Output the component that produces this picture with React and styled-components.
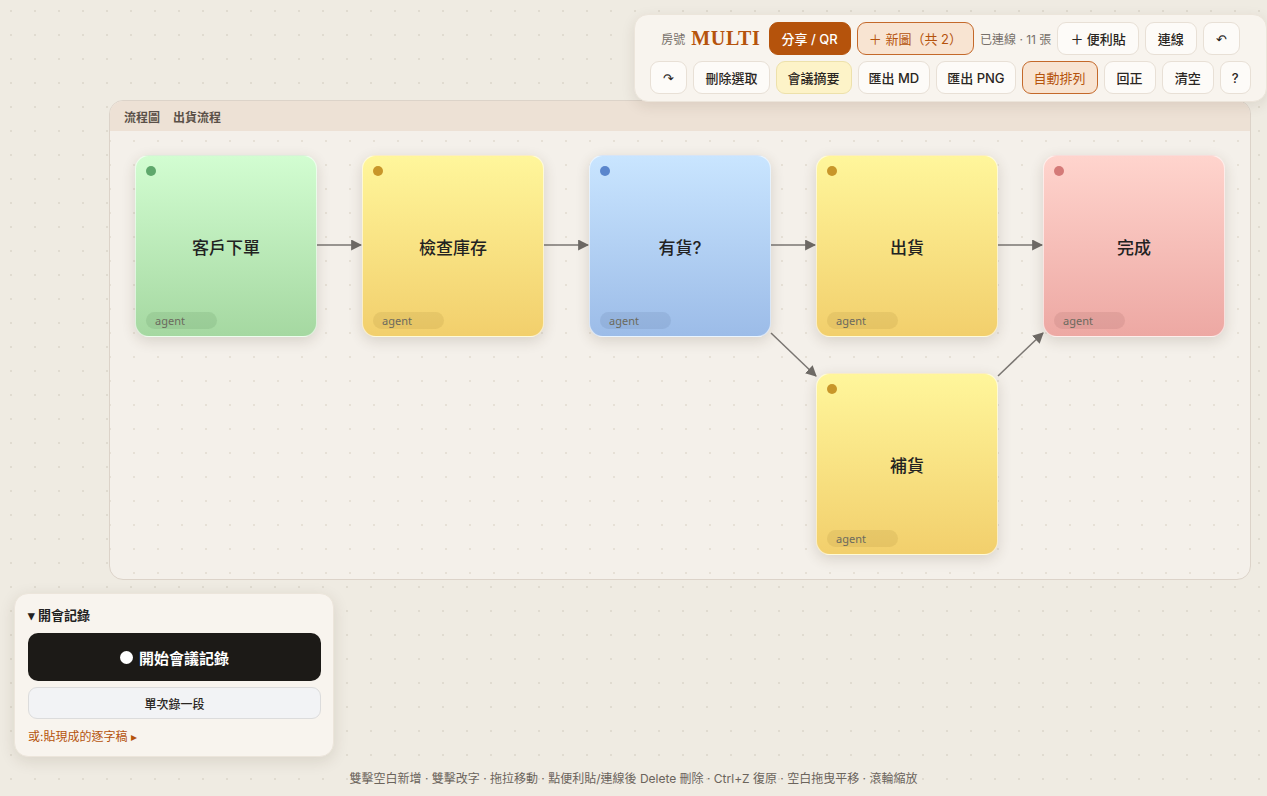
import React from 'react'
import styled, { createGlobalStyle, css } from 'styled-components'

const GlobalStyle = createGlobalStyle`
  html, body {
    margin: 0;
    height: 100%;
  }
  body {
    font-family: Inter, "Noto Sans CJK TC", sans-serif;
    color: #2a2622;
    background-color: #efebe2;
    background-image: radial-gradient(circle, #e0dbd0 1px, transparent 1.3px);
    background-size: 24px 24px;
    background-position: -1px -1px;
    overflow: hidden;
  }
`

const Page = styled.div`
  position: relative;
  width: 1267px;
  height: 796px;
`

/* ---------- toolbar ---------- */

const Toolbar = styled.div`
  position: absolute;
  top: 14px;
  left: 634px;
  width: 633px;
  box-sizing: border-box;
  padding: 7px 0;
  display: flex;
  flex-direction: column;
  align-items: center;
  gap: 6px;
  background: #f8f4ee;
  border: 1px solid #ece5db;
  border-radius: 14px;
  box-shadow: 0 4px 14px rgba(60, 40, 20, 0.1);
`

const ToolRow = styled.div`
  display: flex;
  align-items: center;
  gap: 6px;
`

const Muted = styled.span`
  font-size: 12px;
  color: #77706a;
`

const Room = styled.span`
  font-family: "Liberation Serif", serif;
  font-weight: 700;
  font-size: 20px;
  letter-spacing: 0.7px;
  color: #b5530c;
  margin-right: 2px;
`

const variants = {
  plain: css`
    background: #fdfbf8;
    border-color: #e8e0d6;
    color: #2a2622;
  `,
  primary: css`
    background: #b5530c;
    border-color: #b5530c;
    color: #fff;
  `,
  accent: css`
    background: #f8e4d2;
    border-color: #c4692a;
    color: #b5530c;
    font-weight: 400;
  `,
  soft: css`
    background: #fdf3c8;
    border-color: #ede1ab;
    color: #2a2622;
  `,
}

const Btn = styled.button`
  height: 33px;
  box-sizing: border-box;
  padding: 0 ${p => p.$pad || 11}px;
  border: 1px solid;
  border-radius: 9px;
  font-family: inherit;
  font-size: 13px;
  font-weight: 500;
  display: inline-flex;
  align-items: center;
  justify-content: center;
  gap: 4px;
  ${p => variants[p.$v || 'plain']}
`

/* ---------- frame / diagram ---------- */

const Frame = styled.section`
  position: absolute;
  left: 109px;
  top: 100px;
  width: 1142px;
  height: 480px;
  box-sizing: border-box;
  border: 1.5px solid #dcd3c9;
  border-radius: 14px;
  overflow: hidden;
  display: flex;
  flex-direction: column;
  background-color: #f4f0ea;
  background-image: radial-gradient(circle, #e6e0d6 1px, transparent 1.3px);
  background-size: 24px 24px;
  background-position: 12px 4px;
`

const FrameHead = styled.div`
  height: 30px;
  flex: none;
  display: flex;
  align-items: center;
  gap: 13px;
  padding-left: 14px;
  background: #ede1d5;
  font-size: 12px;
  font-weight: 700;
  color: #5a5048;
`

const Canvas = styled.div`
  position: relative;
  flex: 1;
`

const palettes = {
  green: { top: '#d2fdd1', bottom: '#a5d8a1', dot: '#5fa86c', pill: 'rgba(60,110,60,0.12)' },
  yellow: { top: '#fff69b', bottom: '#f2cf6c', dot: '#c8962a', pill: 'rgba(120,90,20,0.1)' },
  blue: { top: '#c9e5ff', bottom: '#9cbce8', dot: '#5b86cc', pill: 'rgba(50,70,110,0.1)' },
  pink: { top: '#ffd4cd', bottom: '#eda8a3', dot: '#d47a78', pill: 'rgba(110,50,50,0.1)' },
}

const Note = styled.div`
  position: absolute;
  width: 182px;
  height: 182px;
  box-sizing: border-box;
  border-radius: 14px;
  border: 1px solid rgba(255, 255, 255, 0.6);
  background: linear-gradient(180deg, ${p => palettes[p.$c].top}, ${p => palettes[p.$c].bottom});
  box-shadow: 0 4px 14px rgba(70, 50, 30, 0.16);
  display: flex;
  align-items: center;
  justify-content: center;
`

const Dot = styled.span`
  position: absolute;
  left: 10px;
  top: 10px;
  width: 10px;
  height: 10px;
  border-radius: 50%;
  background: ${p => palettes[p.$c].dot};
`

const NoteTitle = styled.div`
  font-size: 17px;
  font-weight: 500;
  color: #222;
  margin-top: 1px;
`

const Pill = styled.span`
  position: absolute;
  left: 10px;
  bottom: 7px;
  width: 71px;
  height: 17px;
  box-sizing: border-box;
  padding-left: 9px;
  border-radius: 9px;
  background: ${p => palettes[p.$c].pill};
  font-family: "Noto Sans", sans-serif;
  font-size: 11px;
  line-height: 17px;
  color: #6b6a5e;
`

const Wires = styled.svg`
  position: absolute;
  left: 0;
  top: 0;
  width: 100%;
  height: 100%;
  pointer-events: none;
`

/* ---------- meeting panel ---------- */

const Panel = styled.aside`
  position: absolute;
  left: 14px;
  top: 593px;
  width: 320px;
  box-sizing: border-box;
  padding: 11px 12px 12px 13px;
  background: #f8f4ee;
  border: 1px solid #ece5db;
  border-radius: 14px;
  box-shadow: 0 4px 16px rgba(60, 40, 20, 0.12);
  display: flex;
  flex-direction: column;
`

const PanelTitle = styled.div`
  font-size: 13px;
  font-weight: 700;
  color: #222;
  margin-bottom: 9px;
`

const RecordBtn = styled.button`
  height: 48px;
  border: none;
  border-radius: 10px;
  background: #1c1a17;
  color: #fff;
  font-family: inherit;
  font-size: 15px;
  font-weight: 700;
  display: flex;
  align-items: center;
  justify-content: center;
  gap: 6px;
`

const RecDot = styled.span`
  width: 13px;
  height: 13px;
  border-radius: 50%;
  background: #fff;
`

const OnceBtn = styled.button`
  margin-top: 6px;
  height: 32px;
  border: 1px solid #dcdcdc;
  border-radius: 9px;
  background: #f2f3f5;
  font-family: inherit;
  font-size: 12px;
  font-weight: 500;
  color: #2a2622;
`

const PasteLink = styled.a`
  margin-top: 8px;
  font-size: 12px;
  color: #b5530c;
`

const Hint = styled.div`
  position: absolute;
  left: 0;
  right: 0;
  top: 769px;
  text-align: center;
  font-size: 12px;
  color: #6b645c;
`

const nodes = [
  { x: 25, y: 24, c: 'green', t: '客戶下單' },
  { x: 252, y: 24, c: 'yellow', t: '檢查庫存' },
  { x: 479, y: 24, c: 'blue', t: '有貨?' },
  { x: 706, y: 24, c: 'yellow', t: '出貨' },
  { x: 933, y: 24, c: 'pink', t: '完成' },
  { x: 706, y: 242, c: 'yellow', t: '補貨' },
]

// canvas coordinates (frame left 109 + border, top 100 + head 31)
const links = [
  [207, 114, 251, 114],
  [434, 114, 478, 114],
  [661, 114, 705, 114],
  [888, 114, 932, 114],
  [661, 202, 706, 245],
  [888, 245, 933, 202],
]

export default function App() {
  return (
    <Page>
      <GlobalStyle />

      <Frame>
        <FrameHead>
          <span>流程圖</span>
          <span>出貨流程</span>
        </FrameHead>
        <Canvas>
          <Wires>
            <defs>
              <marker id="arr" viewBox="0 0 10 10" refX="9" refY="5" markerWidth="11" markerHeight="11" markerUnits="userSpaceOnUse" orient="auto">
                <path d="M0 0 L10 5 L0 10 z" fill="#6e6a66" />
              </marker>
            </defs>
            {links.map(([x1, y1, x2, y2], i) => (
              <line key={i} x1={x1} y1={y1} x2={x2} y2={y2} stroke="#7a7672" strokeWidth="1.5" markerEnd="url(#arr)" />
            ))}
          </Wires>
          {nodes.map(n => (
            <Note key={n.t} $c={n.c} style={{ left: n.x, top: n.y }}>
              <Dot $c={n.c} />
              <NoteTitle>{n.t}</NoteTitle>
              <Pill $c={n.c}>agent</Pill>
            </Note>
          ))}
        </Canvas>
      </Frame>

      <Toolbar>
        <ToolRow>
          <Muted>房號</Muted>
          <Room>MULTI</Room>
          <Btn $v="primary" $pad={12}>分享 / QR</Btn>
          <Btn $v="accent">＋ 新圖（共 2）</Btn>
          <Muted>已連線 · 11 張</Muted>
          <Btn $pad={12}>＋ 便利貼</Btn>
          <Btn $pad={12}>連線</Btn>
          <Btn $pad={12}>↶</Btn>
        </ToolRow>
        <ToolRow>
          <Btn $pad={12}>↷</Btn>
          <Btn>刪除選取</Btn>
          <Btn $v="soft">會議摘要</Btn>
          <Btn $pad={10}>匯出 MD</Btn>
          <Btn $pad={10}>匯出 PNG</Btn>
          <Btn $v="accent">自動排列</Btn>
          <Btn $pad={12}>回正</Btn>
          <Btn $pad={12}>清空</Btn>
          <Btn $pad={11}>?</Btn>
        </ToolRow>
      </Toolbar>

      <Panel>
        <PanelTitle>▾ 開會記錄</PanelTitle>
        <RecordBtn>
          <RecDot />
          開始會議記錄
        </RecordBtn>
        <OnceBtn>單次錄一段</OnceBtn>
        <PasteLink>或:貼現成的逐字稿 ▸</PasteLink>
      </Panel>

      <Hint>
        雙擊空白新增 · 雙擊改字 · 拖拉移動 · 點便利貼/連線後 Delete 刪除 · Ctrl+Z 復原 · 空白拖曳平移 · 滾輪縮放
      </Hint>
    </Page>
  )
}
